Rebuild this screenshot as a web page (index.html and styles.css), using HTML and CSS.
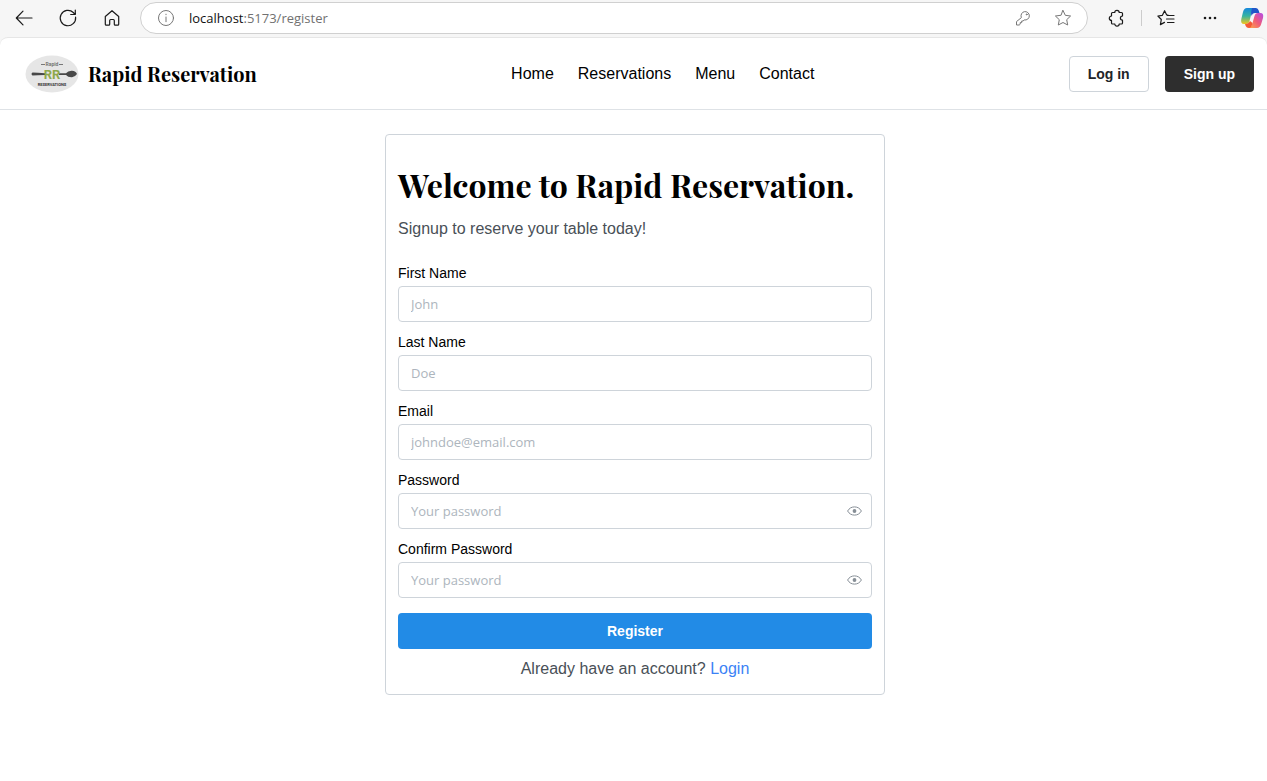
FILE: index.html
```html
<!DOCTYPE html>
<html lang="en">
<head>
<meta charset="utf-8">
<title>Rapid Reservation</title>
<link rel="stylesheet" href="styles.css">
</head>
<body>
<div class="toolbar">
  <div class="toolbar-nav">
    <button class="tool" aria-label="Back"><svg width="20" height="20" viewBox="0 0 20 20"><path d="M18 10H2.5M9 3.2 2.3 10 9 16.8"/></svg></button>
    <button class="tool" aria-label="Refresh"><svg width="20" height="20" viewBox="0 0 20 20"><path d="M17.6 9.200A7.700 7.700 0 1 1 15.300 4.500L17 6.300M17.300 2V6.500H12.700"/></svg></button>
    <button class="tool" aria-label="Home"><svg width="20" height="20" viewBox="0 0 20 20"><path d="M10 2.700 3.300 8.500V16.200Q3.300 17.200 4.300 17.200H6.700Q7.700 17.200 7.700 16.200V12.500Q7.700 11.500 8.700 11.500H11.300Q12.300 11.500 12.300 12.500V16.200Q12.300 17.200 13.300 17.200H15.700Q16.700 17.200 16.700 16.200V8.500Z"/></svg></button>
  </div>
  <div class="address">
    <svg class="muted" width="18" height="18" viewBox="0 0 18 18"><circle cx="9" cy="9" r="7.500"/><path d="M9 8V12.700M9 5.200V5.700"/></svg>
    <span class="url"><span class="host">localhost</span>:5173/register</span>
    <button class="tool muted" aria-label="Passwords"><svg width="18" height="18" viewBox="0 0 18 18"><path d="M7.200 8.300A4.200 4.200 0 1 1 10.200 10.900L9.200 12H7.700V13.600H6.200V15.200L5.200 16H2.500V13Z"/><circle cx="12.700" cy="5.400" r=".5"/></svg></button>
    <button class="tool muted" aria-label="Add to favorites"><svg width="18" height="18" viewBox="0 0 18 18"><path d="M9 1.500 11.300 6.300 16.600 7 12.700 10.700 13.700 16 9 13.500 4.300 16 5.300 10.700 1.400 7 6.700 6.300Z"/></svg></button>
  </div>
  <div class="toolbar-end">
    <button class="tool" aria-label="Extensions"><svg width="18" height="18" viewBox="0 0 18 18"><path d="M4.500 3.500H6.800A2.200 2.200 0 0 1 11.200 3.500H13.500Q14.500 3.500 14.500 4.500V7A2.100 2.100 0 0 0 14.500 11.200V14Q14.500 15 13.500 15H11.200A2.200 2.200 0 0 1 6.800 15H4.500Q3.500 15 3.500 14V11.400A2.200 2.200 0 0 1 3.500 7V4.500Q3.500 3.500 4.500 3.500Z"/></svg></button>
    <span class="divider"></span>
    <button class="tool" aria-label="Favorites"><svg width="18" height="18" viewBox="0 0 18 18"><path d="M11 6 9.700 5.900 7.600 1.700 5.400 6.300.900 7 4.300 10.500 3.400 15.600 7.500 13.400M10.500 6.500H17M9.500 10H17M10.500 13.500H17"/></svg></button>
    <button class="tool" aria-label="More"><svg class="dots" width="18" height="18" viewBox="0 0 18 18"><circle cx="4" cy="9" r="1.300"/><circle cx="9" cy="9" r="1.300"/><circle cx="14" cy="9" r="1.300"/></svg></button>
    <button class="tool" aria-label="Copilot"><svg class="copilot" width="24" height="24" viewBox="0 0 24 24">
      <defs>
        <linearGradient id="cool" x1="0" y1="0" x2="0" y2="1"><stop offset="0" stop-color="#1687dd"/><stop offset=".5" stop-color="#35b4a0"/><stop offset="1" stop-color="#f3c51d"/></linearGradient>
        <linearGradient id="warm" x1="0" y1="1" x2="1" y2="0"><stop offset="0" stop-color="#ffad45"/><stop offset=".5" stop-color="#f05c78"/><stop offset="1" stop-color="#b44be8"/></linearGradient>
      </defs>
      <path fill="url(#cool)" d="M7 2H16Q12.500 3 11.500 7L9.500 15Q8.800 18 6 18H4Q.300 18 1.300 13L3 6Q4 2 7 2Z"/>
      <path fill="#2056c8" d="M12 2H16Q18 2 18.700 4.500L19.500 7H15Q12.500 7 11.500 10L11 7Q12 2 12 2Z"/>
      <path fill="url(#warm)" d="M18 7H20.500Q24 7 23 12L21.200 18Q20 22 17 22H8Q11.500 21 12.500 17L14.500 10Q15.300 7 18 7Z"/>
      <path fill="#f45a35" d="M5 18Q8.700 18 10 15L12.500 17Q11.500 22 9 22Q6.500 22 5.700 20Z"/>
    </svg></button>
  </div>
</div>
<div class="page">
  <header class="header">
    <a class="brand" href="#">
      <svg class="logo" width="54" height="38" viewBox="0 0 54 38">
        <ellipse cx="27" cy="19" rx="26.500" ry="18.500" fill="#e6e6e6"/>
        <path d="M16 9.500H20M34 9.500H38" stroke="#777" stroke-width="1"/>
        <path d="M7.500 17.500 13 17.700 20 18.200V20L13 20.300 7.500 20.500Q5.500 19 7.500 17.500ZM34 18.200H41Q43 15.500 47 15.700 51 16 52 19 50 22 47 22.300 43 22.500 41 20H34Z" fill="#484848"/>
        <text x="27" y="11" class="logo-top">Rapid</text>
        <text x="27" y="24" class="logo-mid">RR</text>
        <text x="27" y="31" class="logo-bottom">RESERVATIONS</text>
      </svg>
      <span>Rapid Reservation</span>
    </a>
    <nav class="menu">
      <a href="#">Home</a>
      <a href="#">Reservations</a>
      <a href="#">Menu</a>
      <a href="#">Contact</a>
    </nav>
    <div class="actions">
      <button class="button outline">Log in</button>
      <button class="button dark">Sign up</button>
    </div>
  </header>
  <main class="main">
    <form class="card">
      <h1 class="title">Welcome to Rapid Reservation.</h1>
      <p class="subtitle">Signup to reserve your table today!</p>
      <div class="fields">
        <div class="field"><label for="first">First Name</label><div class="box"><input id="first" type="text" placeholder="John"></div></div>
        <div class="field"><label for="last">Last Name</label><div class="box"><input id="last" type="text" placeholder="Doe"></div></div>
        <div class="field"><label for="email">Email</label><div class="box"><input id="email" type="email" placeholder="johndoe@email.com"></div></div>
        <div class="field"><label for="password">Password</label><div class="box"><input id="password" type="password" placeholder="Your password"><button type="button" class="eye" aria-label="Show password"><svg width="15" height="15" viewBox="0 0 15 15"><path d="M.600 7Q3 2.900 7.500 2.900T14.400 7Q12 11.100 7.500 11.100T.600 7Z"/><circle cx="7.500" cy="7" r="1.900"/></svg></button></div></div>
        <div class="field"><label for="confirm">Confirm Password</label><div class="box"><input id="confirm" type="password" placeholder="Your password"><button type="button" class="eye" aria-label="Show confirmed password"><svg width="15" height="15" viewBox="0 0 15 15"><path d="M.600 7Q3 2.900 7.500 2.900T14.400 7Q12 11.100 7.500 11.100T.600 7Z"/><circle cx="7.500" cy="7" r="1.900"/></svg></button></div></div>
      </div>
      <button type="submit" class="button primary">Register</button>
      <p class="signin">Already have an account? <a href="#">Login</a></p>
    </form>
  </main>
</div>
</body>
</html>
```

FILE: styles.css
```css
* { box-sizing: border-box; }
body {
  margin: 0;
  min-height: 100vh;
  background: #f6f6f6;
  color: #000;
  font: 16px/24px "Liberation Sans", Arial, sans-serif;
}
button { font: inherit; cursor: pointer; }
a { color: inherit; text-decoration: none; }
svg { display: block; flex: none; }

.toolbar { display: flex; align-items: center; height: 37px; padding: 0 8px 1px 14px; }
.toolbar-nav { display: flex; gap: 24px; margin-right: 18px; }
.tool { display: flex; padding: 0; border: 0; background: none; color: #1a1a1a; }
.tool svg, .address > svg { fill: none; stroke: currentColor; stroke-width: 1.2; stroke-linejoin: round; stroke-linecap: round; }
.address .muted, .address .muted svg { color: #777; stroke-width: 1; }
.address {
  display: flex;
  flex: 1;
  align-items: center;
  gap: 22px;
  height: 32px;
  padding: 0 15px 0 16px;
  border: 1px solid #d0d0d0;
  border-radius: 16px;
  background: #fff;
}
.url { flex: 1; margin-left: -8px; color: #717171; font: 13px/20px "Segoe UI", "Open Sans", sans-serif; }
.host { color: #111; }
.toolbar-end { display: flex; align-items: center; gap: 15px; margin-left: 20px; }
.toolbar-end .tool + .tool { margin-left: 11px; }
.divider { width: 1px; height: 16px; background: #ccc; }
.tool .dots { fill: currentColor; stroke: none; }
.tool .copilot { stroke: none; margin: 0 -5px; }

.page {
  min-height: calc(100vh - 37px);
  border-top: 1px solid #e6e6e6;
  border-radius: 8px 8px 0 0;
  background: #fff;
}
.header {
  display: flex;
  align-items: center;
  justify-content: space-between;
  height: 72px;
  padding: 0 13px 0 25px;
  border-bottom: 1px solid #dee2e6;
}
.brand {
  display: flex;
  align-items: center;
  gap: 9px;
  font: bold 20px/32px "Playfair Display", "Liberation Serif", serif;
}
.logo-top, .logo-mid, .logo-bottom { text-anchor: middle; font-family: Roboto, "Liberation Sans", sans-serif; }
.logo-top { fill: #777; font-size: 5px; }
.logo-mid { fill: #8fa84b; font-size: 13px; font-weight: bold; }
.logo-bottom { fill: #333; font-size: 4px; font-weight: bold; }
.menu { display: flex; gap: 24px; }
.actions { display: flex; gap: 16px; }
.button {
  height: 36px;
  padding: 0 18px;
  border: 1px solid transparent;
  border-radius: 4px;
  font-size: 14px;
  font-weight: bold;
  line-height: 20px;
}
.outline { border-color: #ced4da; background: #fff; color: #212529; }
.dark { background: #2e2e2e; color: #fff; }

.main { display: flex; justify-content: center; padding: 24px 0 24px 3px; }
.card {
  width: 100%;
  max-width: 500px;
  padding: 28px 12px 13px;
  border: 1px solid #ced4da;
  border-radius: 4px;
}
.title {
  margin: 0;
  font: bold 32px/44px "Playfair Display", "Liberation Serif", serif;
}
.subtitle { margin: 10px 0 22px; color: #495057; }
.fields { display: grid; gap: 10px; }
.field label { display: block; margin-bottom: 2px; font-size: 14px; line-height: 21px; }
.box {
  display: flex;
  align-items: center;
  height: 36px;
  border: 1px solid #ced4da;
  border-radius: 4px;
  background: #fff;
}
.box input {
  flex: 1;
  min-width: 0;
  height: 34px;
  padding: 0 12px;
  border: 0;
  outline: 0;
  background: none;
  font: 13px/20px "Segoe UI", "Open Sans", sans-serif;
}
.box input::placeholder { color: #adb5bd; opacity: 1; }
.eye { display: flex; margin-right: 9px; padding: 0; border: 0; background: none; color: #868e96; }
.eye path { fill: none; stroke: currentColor; }
.eye circle { fill: currentColor; }
.primary { width: 100%; margin-top: 15px; background: #228be6; color: #fff; }
.signin { margin: 8px 0 0; color: #495057; text-align: center; }
.signin a { color: #3b82f6; }
```
